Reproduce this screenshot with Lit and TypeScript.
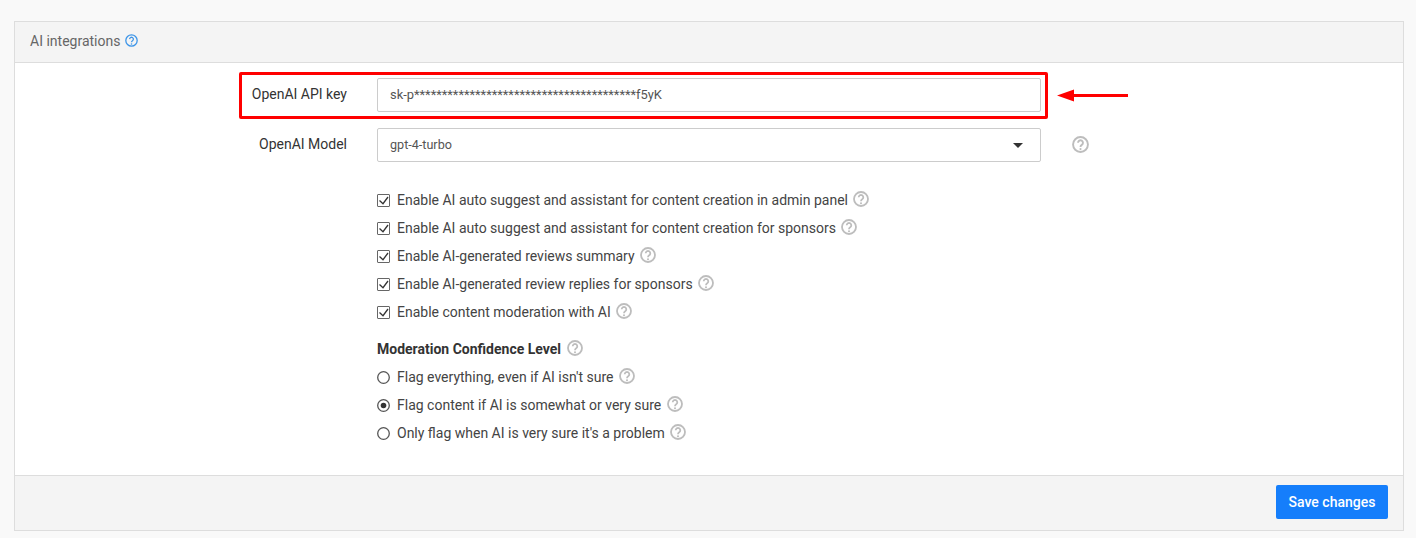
import { LitElement, html, css, svg } from "lit";
import { customElement } from "lit/decorators.js";

const help = (cls = "") => html`<svg class="help ${cls}" viewBox="0 0 16 16" aria-hidden="true">${svg`<circle cx="8" cy="8" r="7"/><path d="M5.7 6.3a2.3 2.3 0 1 1 3.5 2c-.8.5-1.2 1-1.2 2"/><circle class="dot" cx="8" cy="12.3" r="1"/>`}</svg>`;

const checks = [
  "Enable AI auto suggest and assistant for content creation in admin panel",
  "Enable AI auto suggest and assistant for content creation for sponsors",
  "Enable AI-generated reviews summary",
  "Enable AI-generated review replies for sponsors",
  "Enable content moderation with AI",
];
const radios = [
  ["Flag everything, even if AI isn't sure", false],
  ["Flag content if AI is somewhat or very sure", true],
  ["Only flag when AI is very sure it's a problem", false],
] as const;

@customElement("app-root")
export class AppRoot extends LitElement {
  static styles = css`
    :host {
      display: block;
      height: 538px;
      background: #f9f9f9;
      font-family: Roboto, "Liberation Sans", sans-serif;
      font-size: 14px;
      line-height: 20px;
      color: #333;
      padding: 21px 12px 0 14px;
      box-sizing: border-box;
      overflow: hidden;
    }
    .card {
      position: relative;
      border: 1px solid #ddd;
      background: #fff;
      height: 510px;
      box-sizing: border-box;
      display: flex;
      flex-direction: column;
    }
    .head {
      height: 41px;
      box-sizing: border-box;
      background: #f4f4f4;
      border-bottom: 1px solid #ddd;
      padding: 0 15px 2px;
      display: flex;
      align-items: center;
      gap: 5px;
      color: #666;
    }
    .body {
      flex: 1;
      padding-top: 15px;
      display: flex;
      flex-direction: column;
    }
    .row {
      display: grid;
      grid-template-columns: 332px 664px;
      column-gap: 30px;
      align-items: center;
      height: 34px;
      margin-bottom: 16px;
    }
    .label { text-align: right; color: #333; line-height: 32px; margin-top: -2px; }
    .field {
      height: 34px;
      box-sizing: border-box;
      border: 1px solid #ccc;
      border-radius: 2px;
      padding: 0 12px;
      display: flex;
      align-items: center;
      justify-content: space-between;
      font-size: 12.9px;
      color: #555;
      background: #fff;
    }
    .field.model { font-size: 12.6px; }
    .with-help { position: relative; }
    .help { width: 16px; height: 16px; flex: none; fill: none; stroke: #bdbdbd; stroke-width: 1.8; }
    .help .dot { fill: #bdbdbd; stroke: none; }
    .help.blue { stroke: #3d95e8; stroke-width: 1.6; width: 13px; height: 13px; margin-top: -2px; }
    .help.blue .dot { fill: #3d95e8; }
    .help.side { position: absolute; left: 1057px; top: 8px; width: 17px; height: 17px; }
    .caret {
      width: 0; height: 0;
      border-left: 5px solid transparent;
      border-right: 5px solid transparent;
      border-top: 5px solid #333;
      margin-right: 5px;
    }
    .options {
      margin-left: 362px;
      margin-top: 12px;
      display: flex;
      flex-direction: column;
      gap: 8px;
    }
    .opt { display: flex; align-items: center; height: 20px; color: #444; }
    .box {
      width: 13px; height: 13px;
      box-sizing: border-box;
      border: 1px solid #666;
      border-radius: 1px;
      margin-right: 7px;
      display: flex;
      flex: none;
    }
    .box svg { width: 11px; height: 11px; fill: none; stroke: #333; stroke-width: 1.3; overflow: visible; }
    .radio { width: 13px; height: 13px; margin-right: 7px; flex: none; }
    .radio circle { fill: none; stroke: #555; stroke-width: 1.3; }
    .radio .pip { fill: #333; stroke: none; }
    .opt .help { margin-left: 5.5px; margin-top: -2px; }
    .title { font-weight: 700; color: #333; margin-top: 9px; }
    .foot {
      height: 55px;
      box-sizing: border-box;
      background: #f4f4f4;
      border-top: 1px solid #ddd;
      display: flex;
      align-items: center;
      justify-content: flex-end;
      padding: 0 15px 2px 0;
    }
    .save {
      width: 112px;
      height: 34px;
      border: none;
      border-radius: 2px;
      background: #157efb;
      color: #fff;
      font: 500 14px Roboto, "Liberation Sans", sans-serif;
    }
    .mark {
      position: absolute;
      left: 224px;
      top: 50px;
      width: 809px;
      height: 47px;
      box-sizing: border-box;
      border: 3px solid #f00;
      border-radius: 2px;
      pointer-events: none;
    }
    .arrow { position: absolute; left: 1042px; top: 66px; width: 72px; height: 16px; }
  `;

  render() {
    return html`
      <div class="card">
        <div class="head">AI integrations ${help("blue")}</div>
        <div class="body">
          <div class="row">
            <div class="label">OpenAI API key</div>
            <div class="field">sk-p****************************************f5yK</div>
          </div>
          <div class="row with-help">
            <div class="label">OpenAI Model</div>
            <div class="field model">gpt-4-turbo<span class="caret"></span></div>
            ${help("side")}
          </div>
          <div class="options">
            ${checks.map(
              (c) => html`<div class="opt">
                <span class="box"><svg viewBox="0 0 11 11"><path d="M1.5 5.5 5 8.7 10 2"/></svg></span>${c}${help()}
              </div>`
            )}
            <div class="opt title">Moderation Confidence Level${help()}</div>
            ${radios.map(
              ([t, on]) => html`<div class="opt">
                <svg class="radio" viewBox="0 0 13 13"><circle cx="6.5" cy="6.5" r="5.8"/>${on ? svg`<circle class="pip" cx="6.5" cy="6.5" r="2.8"/>` : ""}</svg>${t}${help()}
              </div>`
            )}
          </div>
        </div>
        <div class="foot"><button class="save">Save changes</button></div>
        <div class="mark"></div>
        <svg class="arrow" viewBox="0 0 72 16"><path d="M0 7.5 17 1.5v4.5H71v3H17V13.5z" fill="#f00"/></svg>
      </div>
    `;
  }
}
